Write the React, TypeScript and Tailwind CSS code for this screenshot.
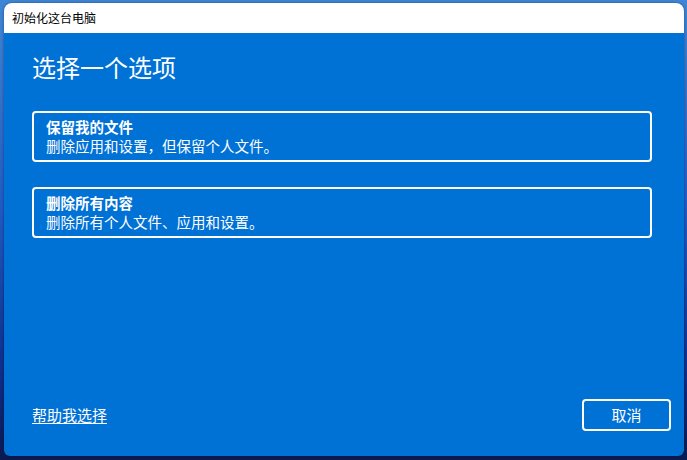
export default function App() {
  const font = { fontFamily: '"Noto Sans CJK SC", "Noto Sans", sans-serif' };

  return (
    <div
      className="h-[460px] w-[687px] overflow-hidden bg-[linear-gradient(180deg,#3f86d6_0%,#1f5cc4_45%,#0d2f8f_80%,#0a1a52_100%)] pl-[4px] pt-[3px]"
      style={font}
    >
      <div className="flex h-[453px] w-[680px] flex-col overflow-hidden rounded-t-[8px] rounded-b-[6px] bg-[#0071d5] shadow-[0_0_3px_rgba(0,0,0,0.4)]">
        {/* Title bar */}
        <div className="flex h-[30px] shrink-0 items-center bg-white pl-[8px] text-[12px] text-black">
          初始化这台电脑
        </div>

        {/* Content */}
        <div className="flex flex-1 flex-col pb-[25px] pl-[28px] pr-[13px] pt-[18px] text-white">
          <h1 className="text-[24px] font-normal leading-[32px]">选择一个选项</h1>

          <div className="mt-[28px] flex flex-col gap-[25px]">
            <button className="flex h-[51px] w-[620px] flex-col justify-center rounded-[4px] border-2 border-white pl-[12px] text-left">
              <span className="text-[14.5px] font-bold leading-[19px]">保留我的文件</span>
              <span className="text-[14.5px] leading-[20px]">删除应用和设置，但保留个人文件。</span>
            </button>
            <button className="flex h-[51px] w-[620px] flex-col justify-center rounded-[4px] border-2 border-white pl-[12px] text-left">
              <span className="text-[14.5px] font-bold leading-[19px]">删除所有内容</span>
              <span className="text-[14.5px] leading-[20px]">删除所有个人文件、应用和设置。</span>
            </button>
          </div>

          <div className="flex-1" />

          <div className="flex items-center justify-between">
            <a className="text-[15px] leading-[20px] underline underline-offset-2">帮助我选择</a>
            <button className="flex h-[32px] w-[89px] items-center justify-center rounded-[4px] border-2 border-white text-[15px]">
              取消
            </button>
          </div>
        </div>
      </div>
    </div>
  );
}
